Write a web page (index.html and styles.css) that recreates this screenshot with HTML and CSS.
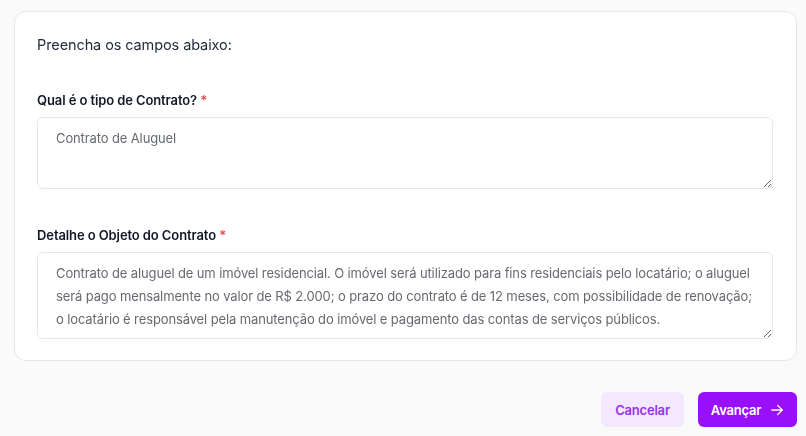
FILE: index.html
```html
<!DOCTYPE html>
<html lang="pt-BR">
<head>
<meta charset="utf-8">
<link rel="stylesheet" href="styles.css">
</head>
<body>
<div class="page">
  <section class="card">
    <h2 class="title">Preencha os campos abaixo:</h2>
    <div class="field field-first">
      <label class="label">Qual é o tipo de Contrato? <span class="req">*</span></label>
      <textarea class="input input-short">Contrato de Aluguel</textarea>
    </div>
    <div class="field">
      <label class="label">Detalhe o Objeto do Contrato <span class="req">*</span></label>
      <textarea class="input input-long">Contrato de aluguel de um imóvel residencial. O imóvel será utilizado para fins residenciais pelo locatário; o aluguel será pago mensalmente no valor de R$ 2.000; o prazo do contrato é de 12 meses, com possibilidade de renovação; o locatário é responsável pela manutenção do imóvel e pagamento das contas de serviços públicos.</textarea>
    </div>
  </section>
  <div class="actions">
    <button class="btn btn-secondary">Cancelar</button>
    <button class="btn btn-primary">Avançar
      <svg class="arrow" width="14" height="14" viewBox="0 0 24 24" fill="none" stroke="currentColor" stroke-width="2.2" stroke-linecap="round" stroke-linejoin="round"><path d="M3 12h18"/><path d="M13 4l8 8-8 8"/></svg>
    </button>
  </div>
</div>
</body>
</html>
```
FILE: styles.css
```css
* { box-sizing: border-box; }
html, body {
  margin: 0;
  background: #fafafa;
  font-family: Inter, "Noto Sans", sans-serif;
}
.page {
  padding: 11px 9px 0 14px;
}
.card {
  background: #fff;
  border: 1px solid #e7e7ea;
  border-radius: 12px;
  padding: 22px 23px 21px 22px;
}
.title {
  margin: 0;
  font-size: 14.5px;
  letter-spacing: -0.1px;
  line-height: 22px;
  font-weight: 400;
  color: #1f2937;
}
.field { margin-top: 36px; }
.field-first { margin-top: 34px; }
.label {
  display: block;
  font-size: 13px;
  letter-spacing: -0.1px;
  line-height: 20px;
  font-weight: 600;
  color: #111827;
  margin-bottom: 7px;
}
.req { color: #ef4444; }
.input {
  display: block;
  width: 100%;
  border: 1px solid #e5e7eb;
  border-radius: 6px;
  padding: 9px 18px;
  font-family: Inter, "Noto Sans", sans-serif;
  font-size: 13px;
  letter-spacing: -0.12px;
  line-height: 23px;
  color: #666a70;
  background: #fff;
  resize: vertical;
  outline: none;
}
.input-short { height: 72px; }
.input-long { height: 87px; }
.actions {
  display: flex;
  justify-content: flex-end;
  gap: 14px;
  margin-top: 31px;
}
.btn {
  height: 35px;
  border: none;
  border-radius: 6px;
  font-family: Inter, "Noto Sans", sans-serif;
  font-size: 13px;
  letter-spacing: -0.2px;
  font-weight: 600;
  display: inline-flex;
  align-items: center;
  gap: 9px;
  cursor: pointer;
}
.btn-secondary {
  background: #f3e8ff;
  color: #9333ea;
  width: 83px;
  padding: 0;
  justify-content: center;
}
.btn-primary {
  background: #9810fa;
  color: #fff;
  width: 99px;
  padding: 0;
  justify-content: center;
}
.arrow { display: block; }
```
